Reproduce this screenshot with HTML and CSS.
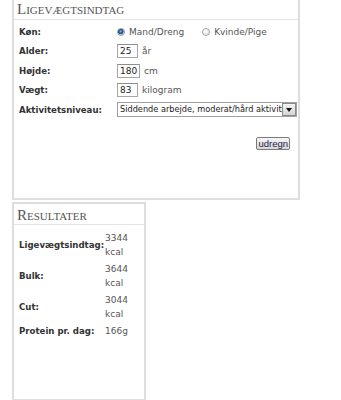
FILE: index.html
```html
<!DOCTYPE html>
<html lang="da">
<head>
<meta charset="utf-8">
<title>Ligevægtsindtag</title>
<link rel="stylesheet" href="styles.css">
</head>
<body>
<div class="wrap">
  <section class="panel panel-top">
    <h2 class="ptitle">Ligevægtsindtag</h2>
    <div class="form">
      <div class="lbl">Køn:</div>
      <div class="fld">
        <span class="radio on"></span><span class="rtext">Mand/Dreng</span>
        <span class="radio off"></span><span class="rtext">Kvinde/Pige</span>
      </div>
      <div class="lbl">Alder:</div>
      <div class="fld"><span class="inp w20">25</span><span class="unit">år</span></div>
      <div class="lbl">Højde:</div>
      <div class="fld"><span class="inp w22">180</span><span class="unit">cm</span></div>
      <div class="lbl">Vægt:</div>
      <div class="fld"><span class="inp w20">83</span><span class="unit">kilogram</span></div>
      <div class="lbl">Aktivitetsniveau:</div>
      <div class="fld">
        <span class="sel"><span class="seltext">Siddende arbejde, moderat/hård aktivitet</span><span class="selbtn"><span class="tri"></span></span></span>
      </div>
    </div>
    <div class="actions"><span class="btn">udregn</span></div>
  </section>
  <section class="panel panel-res">
    <h2 class="ptitle">Resultater</h2>
    <div class="res">
      <div class="rl">Ligevægtsindtag:</div><div class="rv">3344 kcal</div>
      <div class="rl">Bulk:</div><div class="rv">3644 kcal</div>
      <div class="rl">Cut:</div><div class="rv">3044 kcal</div>
      <div class="rl">Protein pr. dag:</div><div class="rv">166g</div>
    </div>
  </section>
</div>
</body>
</html>
```
FILE: styles.css
```css
html, body {
  margin: 0;
  padding: 0;
  background: #fff;
}
body {
  font-family: "DejaVu Sans", Verdana, sans-serif;
  font-size: 9px;
  color: #444;
}
.wrap {
  padding-left: 12px;
  display: flex;
  flex-direction: column;
  align-items: flex-start;
  gap: 2px;
}
.panel {
  box-sizing: border-box;
  border: 2px solid #dedede;
  background: #fff;
}
.panel-top {
  width: 288px;
  height: 200px;
  border-top: none;
}
.panel-res {
  width: 134px;
  height: 199px;
}
.ptitle {
  margin: 0;
  font-family: "Liberation Serif", "Times New Roman", serif;
  font-variant: small-caps;
  font-weight: normal;
  font-size: 15px;
  line-height: 17px;
  color: #555;
  padding: 1px 0 0 3px;
  box-sizing: border-box;
  border-bottom: 1px solid #e6e6e6;
}
.panel-top .ptitle { height: 20px; padding-top: 1px; }
.panel-res .ptitle { height: 21px; padding-top: 3px; }
.form {
  display: grid;
  grid-template-columns: 98px 1fr;
  grid-auto-rows: 19.5px;
  padding: 2px 0 0 5px;
  align-items: center;
}
.lbl {
  font-weight: bold;
  color: #333;
  font-size: 8.6px;
}
.fld {
  display: flex;
  align-items: center;
  color: #555;
}
.radio {
  box-sizing: border-box;
  width: 8px;
  height: 8px;
  border-radius: 50%;
  border: 1px solid #a8a8a8;
  background: radial-gradient(circle at 40% 35%, #fff, #ddd);
  margin-right: 4px;
}
.radio.on {
  background: radial-gradient(circle at 45% 40%, #8fc4ff 0, #1a5fc9 1.6px, #23406a 2.6px, #d8d8d8 3.1px);
  border-color: #9a9a9a;
}
.rtext { margin-right: 18px; }
.inp {
  box-sizing: border-box;
  height: 14px;
  border: 1px solid #a6a6a6;
  border-top-color: #8e8e8e;
  padding: 0 2px;
  line-height: 12px;
  color: #222;
  margin-right: 4px;
}
.w20 { width: 21px; }
.w22 { width: 23px; }
.unit { color: #555; }
.sel {
  box-sizing: border-box;
  display: flex;
  width: 180px;
  height: 15px;
  border: 1px solid #a0a0a0;
  background: #fff;
}
.seltext {
  flex: 1;
  overflow: hidden;
  white-space: nowrap;
  padding-left: 2px;
  line-height: 13px;
  color: #222;
  font-size: 8.2px;
}
.selbtn {
  box-sizing: border-box;
  width: 14px;
  height: 13px;
  border: 1px solid #8a8a8a;
  background: linear-gradient(#f4f4f4, #d4d4d4);
  display: flex;
  align-items: center;
  justify-content: center;
}
.tri {
  width: 0;
  height: 0;
  border-left: 3px solid transparent;
  border-right: 3px solid transparent;
  border-top: 4px solid #111;
}
.actions {
  display: flex;
  justify-content: flex-end;
  padding: 17px 8px 0 0;
}
.btn {
  box-sizing: border-box;
  height: 13px;
  padding: 0 1px;
  border: 1px solid #7a7a7a;
  border-radius: 2px;
  background: linear-gradient(#f6f6f6, #d6d6d6);
  color: #1b1b4a;
  font-family: "Liberation Sans", Arial, sans-serif;
  font-size: 9.5px;
  line-height: 11px;
}
.res {
  display: grid;
  grid-template-columns: 86px 1fr;
  row-gap: 3px;
  padding: 6px 0 0 5px;
  align-items: center;
}
.rl {
  font-weight: bold;
  color: #333;
  font-size: 8.6px;
}
.rv {
  color: #555;
  line-height: 14px;
  width: 32px;
}
```
